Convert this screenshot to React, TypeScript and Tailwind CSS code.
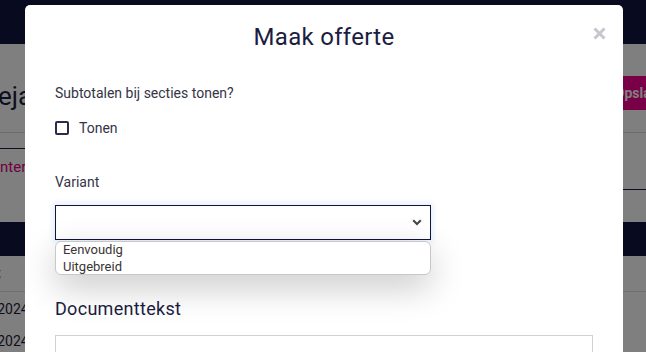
import React from "react";

export default function App() {
  return (
    <div
      className="relative w-[646px] h-[352px] overflow-hidden bg-white"
      style={{ fontFamily: "Roboto, 'Liberation Sans', sans-serif" }}
    >
      {/* Background page */}
      <div className="flex flex-col w-full">
        <div className="h-[44px] bg-[#10143e]" />
        <div className="h-[89px] flex items-center justify-between border-b border-[#d6d6d6]">
          <div className="text-[26px] text-[#1c1d3f] ml-[-2px] pt-[16px]">ejaarden</div>
          <div className="h-[34px] bg-[#f2008c] text-white font-bold text-[14px] flex items-center pl-[4px] pr-[20px] mr-[-40px] mt-[10px]">
            Opslaan
          </div>
        </div>
        <div className="flex h-[57px]">
          <div className="w-[300px] mt-[15px] border-t border-[#1c1d3f] flex items-start">
            <div className="text-[15px] text-[#e0007c] pt-[7px] ml-[-4px]">Intern</div>
          </div>
          <div className="flex-1 border-b border-[#1c1d3f]" />
        </div>
        <div className="h-[32px]" />
        <div className="h-[34px] bg-[#10143e]" />
        <div className="h-[36px] flex items-center border-b border-[#dcdcdc]">
          <div className="text-[14px] text-[#1c1d3f] ml-[-4px] font-medium">t</div>
        </div>
        <div className="h-[34px] flex items-center">
          <div className="text-[14px] text-[#1c1d3f] ml-[-42px]">01-01-2024</div>
        </div>
        <div className="h-[30px] flex items-center">
          <div className="text-[14px] text-[#1c1d3f] ml-[-42px]">01-02-2024</div>
        </div>
      </div>

      {/* Overlay */}
      <div className="absolute inset-0 bg-black/50" />

      {/* Modal */}
      <div className="absolute left-[25px] top-[5px] w-[598px] h-[400px] bg-white rounded-[5px] pt-[16px] px-[30px]">
        <div className="text-center text-[24px] leading-[32px] text-[#1c1d3f] font-normal tracking-[0.3px]">
          Maak offerte
        </div>
        <svg
          className="absolute left-[568px] top-[22px]"
          width="13"
          height="13"
          viewBox="0 0 13 13"
        >
          <path d="M1.5 1.5 L11.5 11.5 M11.5 1.5 L1.5 11.5" stroke="#c6c7cd" strokeWidth="3" strokeLinecap="butt" />
        </svg>

        <div className="mt-[30px] text-[14px] leading-[20px] text-[#343446]">
          Subtotalen bij secties tonen?
        </div>
        <div className="mt-[15px] flex items-center gap-[10px] h-[20px]">
          <div className="w-[14px] h-[14px] border-2 border-[#2b2c4b] rounded-[2px]" />
          <span className="text-[14px] text-[#343446]">Tonen</span>
        </div>

        <div className="mt-[34px] text-[14px] leading-[20px] text-[#343446]">Variant</div>

        <div className="relative mt-[13px] w-[376px]">
          <div className="h-[35px] border border-[#10143e] bg-white flex items-center justify-end pr-[8px] shadow-[0_0_6px_2px_rgba(120,170,240,0.2)]">
            <svg width="10" height="7" viewBox="0 0 10 7">
              <path d="M1.2 1.2 L5 5 L8.8 1.2" stroke="#444" strokeWidth="2" fill="none" />
            </svg>
          </div>
          <div className="absolute left-0 top-[36px] w-[376px] h-[34px] bg-white border border-[#c8c8c8] rounded-[6px] shadow-[0_12px_35px_rgba(0,0,0,0.22)] pl-[7px] text-[13px] leading-[16px] text-[#3a3434]">
            <div>Eenvoudig</div>
            <div className="mt-[1px]">Uitgebreid</div>
          </div>
        </div>

        <div className="mt-[57px] text-[18px] leading-[24px] text-[#1c1d3f] font-normal tracking-[0.3px]">
          Documenttekst
        </div>
        <div className="mt-[14px] w-[538px] h-[100px] border border-[#d2d2d2]" />
      </div>
    </div>
  );
}
